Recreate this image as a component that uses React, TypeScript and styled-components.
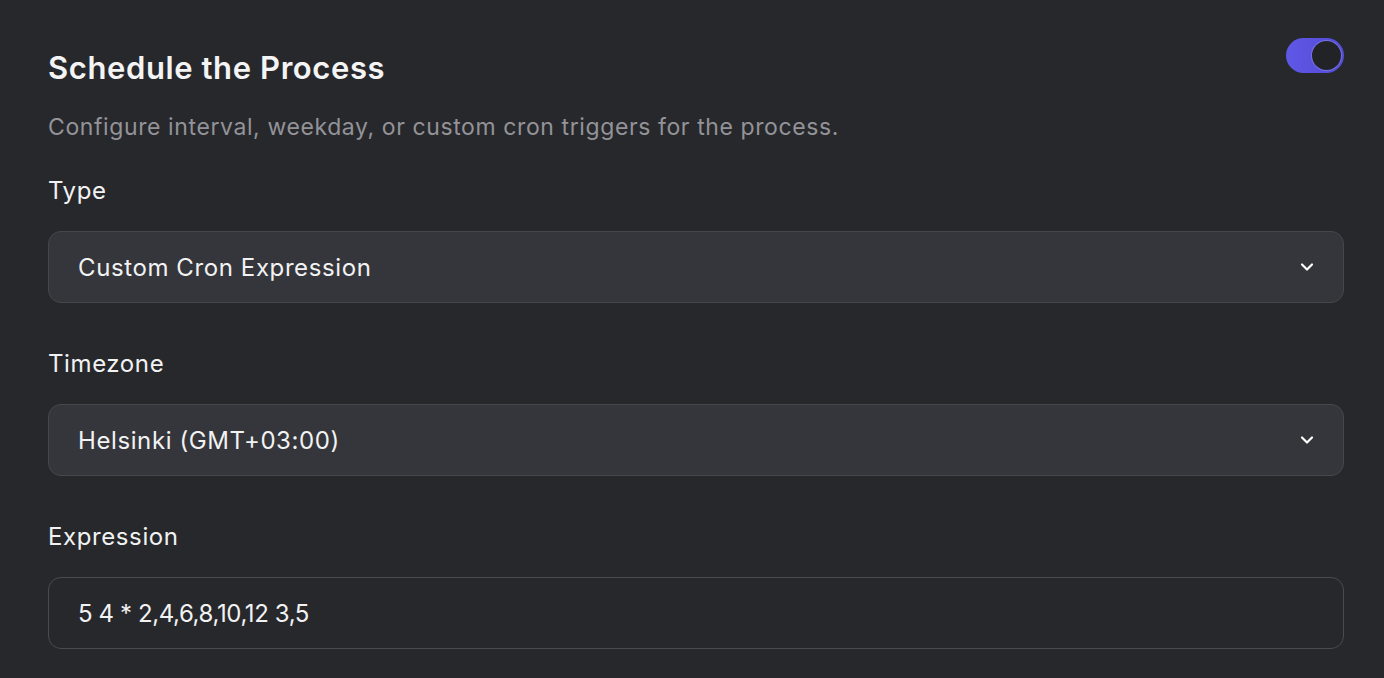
import styled, {createGlobalStyle} from "styled-components";
import {ChevronDown} from "lucide-react";
import {FC, useState} from "react";

const Global = createGlobalStyle`
    html, body {
        margin: 0;
        background: #27282c;
    }
    body {
        font-family: Inter, "Noto Sans", sans-serif;
        color: #f2f2f3;
        -webkit-font-smoothing: antialiased;
    }
`;

const Page = styled.div`
    min-height: 100vh;
    padding: 50px 40px 0 48px;
    box-sizing: border-box;
    display: flex;
    flex-direction: column;
`;

const Header = styled.div`
    display: flex;
    justify-content: space-between;
    align-items: flex-start;
`;

const Title = styled.h1`
    margin: 0;
    font-size: 31px;
    line-height: 36px;
    font-weight: 600;
    letter-spacing: 0.6px;
    color: #f4f4f5;
`;

const Subtitle = styled.p`
    margin: 26px 0 0;
    font-size: 23px;
    line-height: 30px;
    letter-spacing: 0.6px;
    color: #939398;
`;

const Toggle = styled.button<{ $on: boolean }>`
    width: 58px;
    height: 35px;
    margin-top: -12px;
    border-radius: 18px;
    border: none;
    padding: 3px;
    cursor: pointer;
    display: flex;
    justify-content: ${p => (p.$on ? "flex-end" : "flex-start")};
    background: ${p => (p.$on ? "linear-gradient(90deg, #5f58e6, #534bd6)" : "#46474c")};
`;

const Knob = styled.span`
    width: 29px;
    height: 29px;
    border-radius: 50%;
    background: #222327;
    box-shadow: 0 0 0 1px rgba(150, 145, 240, 0.5);
`;

const Field = styled.div<{ $first?: boolean }>`
    display: flex;
    flex-direction: column;
    margin-top: ${p => (p.$first ? "34px" : "46px")};
`;

const Label = styled.label`
    font-size: 24px;
    line-height: 30px;
    letter-spacing: 0.6px;
    color: #f2f2f3;
    margin-bottom: 25px;
`;

const SelectBox = styled.div`
    height: 72px;
    box-sizing: border-box;
    background: #35363b;
    border: 1px solid #46474c;
    border-radius: 13px;
    padding: 0 26px 0 29px;
    display: flex;
    align-items: center;
    justify-content: space-between;
    font-size: 24px;
    letter-spacing: 0.6px;
    color: #f2f2f3;
    cursor: pointer;
`;

const Input = styled.input`
    height: 72px;
    box-sizing: border-box;
    background: #27282c;
    border: 1px solid #4a4b50;
    border-radius: 13px;
    padding: 0 29px;
    font-family: inherit;
    font-size: 24px;
    letter-spacing: -0.4px;
    color: #f2f2f3;
    &:focus {
        outline: none;
    }
`;

const App: FC = () => {
    const [enabled, setEnabled] = useState(true);
    const [expr, setExpr] = useState("5 4 * 2,4,6,8,10,12 3,5");

    return (
        <>
            <Global/>
            <Page>
                <Header>
                    <Title>Schedule the Process</Title>
                    <Toggle $on={enabled} onClick={() => setEnabled(!enabled)}>
                        <Knob/>
                    </Toggle>
                </Header>
                <Subtitle>Configure interval, weekday, or custom cron triggers for the process.</Subtitle>

                <Field $first>
                    <Label>Type</Label>
                    <SelectBox>
                        <span>Custom Cron Expression</span>
                        <ChevronDown size={20} strokeWidth={2.6} color="#ffffff"/>
                    </SelectBox>
                </Field>

                <Field>
                    <Label>Timezone</Label>
                    <SelectBox>
                        <span>Helsinki (GMT+03:00)</span>
                        <ChevronDown size={20} strokeWidth={2.6} color="#ffffff"/>
                    </SelectBox>
                </Field>

                <Field>
                    <Label>Expression</Label>
                    <Input value={expr} onChange={e => setExpr(e.target.value)}/>
                </Field>
            </Page>
        </>
    );
};

export default App;
